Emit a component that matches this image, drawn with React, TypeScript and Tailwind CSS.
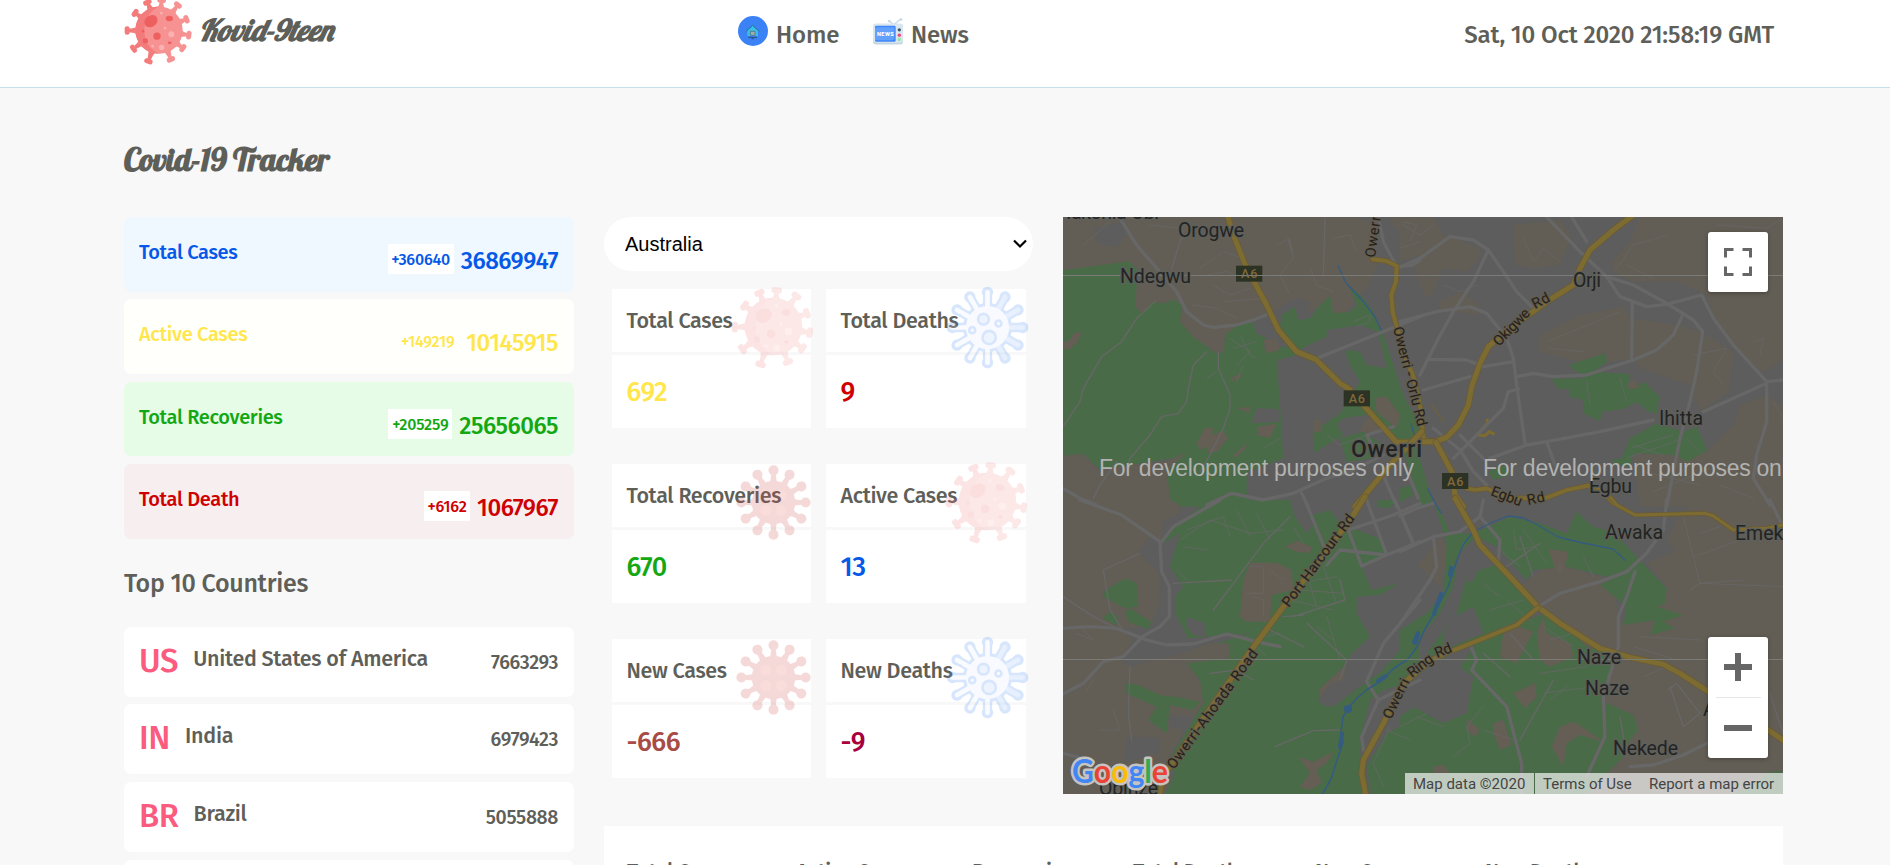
import React from "react";

function CoronaPink({ className }: { className: string }) {
  const knobs: [number, number][] = [
    [183, 3], [232, 17], [258, 60], [265, 108], [247, 147], [211, 181],
  ];
  const darkKnobs: [number, number][] = [
    [140, 9], [143, 187], [98, 149], [79, 94], [103, 41],
  ];
  const spike = ([x, y]: [number, number], color: string) => {
    const a = (Math.atan2(y - 93, x - 175) * 180) / Math.PI;
    const r = Math.hypot(x - 175, y - 93);
    return (
      <g key={`${x}-${y}`} transform={`translate(175 93) rotate(${a})`} fill={color}>
        <path d={`M62 -13 Q74 -6 ${r - 6} -5 V5 Q74 6 62 13 Z`} />
        <rect x={r - 8} y={-13} width={15} height={26} rx={7} />
      </g>
    );
  };
  return (
    <svg viewBox="70 -12 210 212" className={className}>
      {darkKnobs.map((k) => spike(k, "#f37b7b"))}
      {knobs.map((k) => spike(k, "#f79292"))}
      <circle cx="175" cy="93" r="71" fill="#f79292" />
      <path d="M175 22 A71 71 0 0 0 175 164 C145 150 131 122 131 93 C131 62 146 36 175 22Z" fill="#f37b7b" />
      <g fill="#ee5f5f">
        <ellipse cx="151" cy="66" rx="21" ry="17" transform="rotate(-35 151 66)" />
        <ellipse cx="206" cy="58" rx="11" ry="8" />
        <circle cx="169" cy="111" r="11" />
        <circle cx="134" cy="125" r="8" />
        <ellipse cx="207" cy="131" rx="6" ry="4" />
        <circle cx="127" cy="96" r="4" />
      </g>
      <g fill="#fbb1b1">
        <circle cx="212" cy="105" r="9" />
        <circle cx="183" cy="145" r="8" />
        <circle cx="156" cy="141" r="4" />
        <circle cx="182" cy="42" r="4" />
        <circle cx="193" cy="87" r="4" />
      </g>
    </svg>
  );
}

const TWELVE = [0, 30, 60, 90, 120, 150, 180, 210, 240, 270, 300, 330];

function CoronaRed({ className }: { className: string }) {
  return (
    <svg viewBox="-112 -112 224 224" className={className}>
      {TWELVE.map((a) => (
        <g key={a} transform={`rotate(${a})`} fill="#cf4844">
          <path d="M54 -14 Q66 -7 88 -7 V7 Q66 7 54 14Z" />
          <circle cx="96" cy="0" r="15" />
        </g>
      ))}
      <circle r="65" fill="#cf4844" />
      {[[-23, -22], [23, -22], [-23, 24], [23, 24]].map(([x, y]) => (
        <circle key={`${x}${y}`} cx={x} cy={y} r="16" fill="#ea564c" />
      ))}
    </svg>
  );
}

function CoronaBlue({ className }: { className: string }) {
  return (
    <svg viewBox="-125 -125 250 250" className={className} fill="none" strokeLinecap="round">
      {TWELVE.map((a) => (
        <g key={a} transform={`rotate(${a})`}>
          <path d="M70 0H107" stroke="#3c87f5" strokeWidth="28" />
          <circle cx="106" cy="0" r="17" fill="#3c87f5" />
        </g>
      ))}
      <circle r="74" fill="#3c87f5" />
      {TWELVE.map((a) => (
        <path key={a} d="M64 0H106" transform={`rotate(${a})`} stroke={a > 270 || a < 90 ? "#8fb9fb" : "#e6eeff"} strokeWidth="14" />
      ))}
      <circle r="65" fill="#e6ebff" />
      <g stroke="#3c87f5" strokeWidth="8" fill="#a9c9fb">
        <circle cx="-12" cy="-25" r="16" />
        <circle cx="33" cy="-12" r="9" fill="#e6ebff" />
        <circle cx="-46" cy="8" r="9" fill="#e6ebff" />
        <circle cx="5" cy="30" r="20" />
      </g>
      <circle cx="-82" cy="-36" r="4" fill="#3c87f5" />
    </svg>
  );
}

function HomeIcon() {
  return (
    <svg viewBox="0 0 90 90" className="h-[30px] w-[30px]">
      <circle cx="45" cy="45" r="45" fill="#3b82f6" />
      <path d="M28 44V60H60V44L44 29Z" fill="#38c0ea" />
      <path d="M24 46 44 28 64 46" fill="none" stroke="#2a7489" strokeWidth="3" />
      <path d="M37 46h14v12H37z" fill="#9fb0b5" stroke="#4c6470" strokeWidth="2" />
      <path d="M31 64h26M41 68h6" stroke="#2b4f7c" strokeWidth="3" />
    </svg>
  );
}

function NewsIcon() {
  return (
    <svg viewBox="0 0 90 80" className="h-[27px] w-[30px]">
      <path d="M64 18 84 2M60 18 48 8" stroke="#c5d9e8" strokeWidth="4" />
      <circle cx="84" cy="4" r="4" fill="#c5d9e8" />
      <circle cx="49" cy="9" r="4" fill="#c5d9e8" />
      <rect x="0" y="17" width="90" height="62" rx="9" fill="#c3d5e2" />
      <rect x="0" y="17" width="90" height="57" rx="9" fill="#d9e6ee" />
      <rect x="6" y="23" width="62" height="48" rx="4" fill="#3f86fb" />
      <path d="M12 27H64V58Q64 66 56 66H6V30Z" fill="#62a0fb" />
      <text x="12" y="53" fontSize="17" fontWeight="800" fill="#fff" textLength="50" fontFamily="Roboto, sans-serif">NEWS</text>
      <circle cx="79" cy="35" r="5" fill="#34546f" />
      <circle cx="79" cy="51" r="5" fill="#f0427a" />
      <circle cx="79" cy="64" r="5" fill="#8fe8a0" />
    </svg>
  );
}

const stats = [
  { label: "Total Cases", delta: "+360640", value: "36869947", card: "bg-[#eff7ff]", text: "text-[#0558e8]", badge: "w-[66px] bg-white" },
  { label: "Active Cases", delta: "+149219", value: "10145915", card: "bg-[#fffffb]", text: "text-[#ffe64d]", badge: "w-[61px] mr-px" },
  { label: "Total Recoveries", delta: "+205259", value: "25656065", card: "bg-[#e6fce7]", text: "text-[#13a813]", badge: "w-[64px] bg-white" },
  { label: "Total Death", delta: "+6162", value: "1067967", card: "bg-[#f6eeef]", text: "text-[#cf0000]", badge: "w-[46px] bg-white" },
];

const countries = [
  { code: "US", name: "United States of America", count: "7663293" },
  { code: "IN", name: "India", count: "6979423" },
  { code: "BR", name: "Brazil", count: "5055888" },
  { code: "RU", name: "Russian Federation", count: "1285084" },
];

const tiles = [
  { label: "Total Cases", value: "692", color: "text-[#ffe64d]", icon: "pink" },
  { label: "Total Deaths", value: "9", color: "text-[#cf0000]", icon: "blue" },
  { label: "Total Recoveries", value: "670", color: "text-[#13a813]", icon: "red" },
  { label: "Active Cases", value: "13", color: "text-[#0558e8]", icon: "pink" },
  { label: "New Cases", value: "-666", color: "text-[#a94b45]", icon: "red" },
  { label: "New Deaths", value: "-9", color: "text-[#a8003c]", icon: "blue" },
];

const HW = { fill: "none", strokeLinejoin: "round" as const, strokeLinecap: "round" as const };

function Highway({ d, w = 15 }: { d: string; w?: number }) {
  return (
    <g {...HW}>
      <path d={d} stroke="#6b5b36" strokeWidth={w + 5} />
      <path d={d} stroke="#7d6c31" strokeWidth={w} />
    </g>
  );
}

function Shield({ x, y }: { x: number; y: number }) {
  return (
    <g>
      <rect x={x} y={y} width="79" height="48" fill="#2c3325" />
      <text x={x + 15} y={y + 38} fontSize="38" fill="#80693a" textLength="49" fontWeight="500">A6</text>
    </g>
  );
}

function OwerriMap() {
  return (
    <svg viewBox="0 0 720 577" className="block h-[577px] w-[720px] font-normal" fontFamily="Roboto, sans-serif">
      <rect width="720" height="577" fill="#5d5d5d" />
      {/* land cover, north-west */}
      <g transform="translate(-13 -12) scale(.33333)">
        <path fill="#625e55" d="M39 36H925L970 60 960 150 985 180 950 250 890 320 850 330 800 310 770 320 780 290 740 280 700 300 660 330 600 345 560 380 520 445 470 440 420 390 380 330 39 330Z" />
        <path fill="#5d5d5d" d="M130 70 215 50 232 85 200 125 145 120Z" />
        <path fill="#625e55" d="M1020 36H1110V130L1085 110 1030 60Z" />
        <path fill="#625e55" d="M39 750 100 745 150 800 240 780 350 770 400 738 440 745 350 800 365 900H39Z" />
        <path fill="#496b48" d="M39 196 237 169 265 195 260 240 256 305 275 325 305 292 345 295 370 283 397 300 390 350 430 395 500 446 522 440 525 390 570 355 605 345 620 385 650 400 640 430 720 425 745 450 680 465 690 600 700 760 590 800 590 905H365L350 800 410 742 370 760 240 780 150 795 100 746 39 752Z" />
        <path fill="#496b48" d="M695 330 735 305 745 345 780 340 810 300 840 272 850 325 900 320 920 300 895 240 940 280 970 320 1000 390 1030 480 1060 570 1110 660V735L1045 715 1000 660 950 630 880 640 860 660 880 690 790 745 790 680 870 625 930 530 900 480 885 435 930 440 950 480 1010 490 985 380 930 360 830 375 830 395 745 435 700 400 690 370Z" />
        <path fill="#496b48" d="M870 700 940 680 1000 720 970 760 890 770Z" />
        <g fill="#655e54">
          <path d="M39 410 60 405 70 385 97 380 80 415 60 433 39 432ZM440 715 465 670 490 668 480 720 450 735ZM480 690 520 678 535 700 500 740 470 745ZM540 520 575 505 570 518 545 528ZM640 405 680 400 690 435 650 445ZM560 610 600 605 600 625ZM550 750 590 715 588 728 555 760ZM625 665 680 655 660 700 620 690ZM790 645 815 645 815 680 790 680ZM975 580 1010 575 1050 630 1040 670 980 620ZM940 650 970 635 990 680 930 680Z" />
        </g>
        <path fill="#5d5d5d" d="M620 610 685 612 690 650 605 655Z" />
      </g>
      {/* land cover, north-east */}
      <g transform="translate(337 -12) scale(.33333)">
        <g fill="#625e55">
          <path d="M720 36H1149V460L1100 500 1060 490 990 420 940 330 920 270 900 260 830 230 700 230 640 200 635 170 690 110Z" />
          <path d="M0 36H100L130 90 240 130 235 165 200 200 130 190 95 270 75 275 45 200 60 150 0 170Z" />
          <path d="M340 60 480 45 515 100 480 180 400 190 345 180ZM115 290 180 260 240 300 235 330 120 315Z" />
          <path d="M420 390 540 330 670 305 690 340 830 360 900 380 1000 440 985 560 900 620 870 540 720 490 700 460 580 480 420 440Z" />
          <path d="M1020 600 1100 570 1149 600V905H720L700 760 760 710 820 700 920 740 1000 660Z" />
        </g>
        <path fill="#496b48" d="M505 480 615 445 622 470 580 500 690 508 690 545 735 532 778 575 770 625 750 622 710 592 670 612 607 620 600 648 580 640 550 625 550 585 510 575 505 550 475 552 455 522 555 520Z" />
        <path fill="#655e54" d="M680 535 705 525 720 545 690 555Z" />
        <path fill="#496b48" d="M770 655 850 680 890 665 922 735 860 772 830 750 700 745 690 785 640 775 635 765 665 760 690 700Z" />
        <path fill="#496b48" d="M0 590 30 640 60 760 100 900H60L0 700ZM265 800 310 780 330 810 280 825ZM0 850 30 840 40 870 0 890Z" />
        <path fill="none" stroke="#7d6c31" strokeWidth="9" d="M262 642V655L232 690 255 692 268 680 284 688" />
      </g>
      {/* land cover, south-west */}
      <g transform="translate(-13 283) scale(.33333)">
        <path fill="#625e55" d="M39 0H385L390 40 340 60 335 125 300 110 265 155 325 220 330 300 300 380 215 385 250 420 210 480 235 500 400 460 480 430 540 430 540 475 420 490 470 590 430 660 360 650 400 700 350 780 350 882H39Z" />
        <path fill="#5d5d5d" d="M230 710 330 712 330 760 220 790ZM355 645 430 650 430 680 360 685Z" />
        <path fill="#496b48" d="M390 100 340 130 370 80 480 0H720L735 50 770 100 800 60 770 50 840 30 870 70 1000 120 1005 165 935 200 965 270 1050 250 990 285 920 290 920 340 960 410 905 460 880 500 815 560 805 600 850 620 900 570 990 520 1050 450 1110 345V500L1060 540 1000 600 940 680 930 760 960 882H345L375 820 350 790 460 610 450 540 410 490 540 475 540 430 500 430 600 400 415 415 375 340 375 290 400 260 360 200Z" />
        <path fill="#496b48" d="M360 0H440L400 18ZM985 0H1040L1020 25 980 20ZM1010 700 1080 640 1110 640V830L1060 882H965L950 800Z" />
        <path fill="#496b48" d="M160 275 225 235 260 250 265 320 225 325 190 305 158 290ZM158 355 180 335 205 350 200 375ZM225 335 240 325 303 365 295 388 235 365ZM228 550 265 555 330 585 365 590 380 590 450 605 430 630 360 615 350 700 295 660 320 620 228 580Z" />
        <g fill="#655e54">
          <path d="M600 188 680 188 725 210 730 270 665 285 660 365 590 365 570 350 580 240ZM705 140 740 122 785 140 780 160 740 155ZM745 770 790 785 850 755 830 790 800 810 815 850 780 870 750 860 780 820ZM805 570 890 495 880 540 850 610 815 615Z" />
        </g>
        <path fill="#5d5d5d" d="M805 600 840 550 880 540 1000 400 1110 300V345L1040 460 950 545 850 620 815 615ZM410 350 465 370 470 410 430 405 410 380ZM960 600 1000 570 1110 540V650L1010 700 950 790 930 720Z" />
      </g>
      {/* land cover, south-east */}
      <g transform="translate(337 283) scale(.33333)">
        <path fill="#625e55" d="M840 40 900 0H1149V882H560L600 560 560 440 640 380 780 300 800 260 740 190 830 150 880 220 800 120Z" />
        <path fill="#625e55" d="M50 200 120 110 150 150 120 260 70 210ZM150 370 200 300 180 380ZM360 260 450 190 640 240 660 400 640 450 560 440 420 330Z" />
        <path fill="#496b48" d="M100 0 130 50 150 100 220 100 330 50 420 70 500 100 530 35 580 80 640 95 700 160 800 265 795 310 770 320 850 345 790 365 825 385 750 405 765 360 670 375 680 320 600 255 640 235 500 200 400 210 380 240 290 140 230 110 175 160 160 260 120 340 60 410 0 480V390L80 340 130 280 140 130Z" />
        <path fill="#655e54" d="M445 147 505 155 490 220 470 220Z" />
        <path fill="#496b48" d="M200 230 240 210 300 190 410 320 340 370 240 410 120 480 80 460 170 340ZM240 415 350 370 440 340 520 400 560 440 620 460 640 500 600 600 700 645 715 690 690 720 680 760 560 882H0V650L40 620 130 670 200 640 220 530 180 500Z" />
        <g fill="#655e54">
          <path d="M310 400 360 380 400 395 350 490 300 470ZM410 400 430 350 440 400 510 430 520 470 450 500 420 480ZM340 580 405 550 410 590 375 625ZM455 740 480 680 520 665 560 690 610 725 540 705 500 730 490 800ZM280 670 310 660 335 735 300 750 280 700ZM200 655 240 690 225 710 200 690ZM100 800 130 795 150 819 100 819Z" />
        </g>
        <path fill="#5d5d5d" d="M200 180 235 190 220 245 200 245ZM160 350 220 320 250 400 130 450 130 400ZM0 580 150 470 200 520 200 620 120 665 50 620 0 640Z" />
        <path fill="#496b48" d="M1100 819 1140 810 1149 830 1149 882H1000L1080 840Z" />
      </g>
      {/* minor roads */}
      <g {...HW} stroke="#676767">
        <g transform="translate(-13 -12) scale(.33333)">
          <path strokeWidth="10" d="M210 40 260 120 320 190 380 260 410 320 460 360 490 367 560 360 610 345 660 325M800 460 900 420 1000 380 1110 335M985 36 1000 110 1040 185 1090 180 1110 165M39 850 90 880 140 900M470 900 545 865 640 885 730 865 830 820 900 800 1000 750M950 690 1030 665M950 690 970 730M755 865 775 905M1000 810 1040 905M1080 820 1105 880" />
          <path strokeWidth="4" d="M39 665 90 590 100 550 155 455 215 410 260 340 315 290M240 760 300 690 335 635 385 625 410 590 415 550 430 480 470 440M505 440 505 490 540 570 540 610 520 670 480 750 450 800M365 190 400 80M825 40 820 210M715 105 725 140M200 770 150 840 130 880M240 760 235 780" />
          <path strokeWidth="3" opacity=".75" d="M450 190 520 140 580 160M470 210 530 200 600 230M490 240 540 270 600 250M520 290 640 280M430 300 500 310 560 340M680 120 720 100 730 160 690 210 720 270M780 190 800 240 850 260M850 100 900 90 920 140M540 400 600 440 560 480M550 430 620 410M570 390 600 450 620 460M580 480 560 530M470 520 500 500M100 120 180 50M300 60 390 70M640 730 690 700M830 690 870 720 950 690M1060 50 1100 60 1080 110M910 350 960 330 960 350 920 365" />
        </g>
        <g transform="translate(337 -12) scale(.33333)">
          <path strokeWidth="10" d="M0 187 60 160 150 95 220 105 265 135 220 230 160 320 110 410 60 510M265 135 310 200 350 260 400 310M0 350 110 320 210 305 260 325 320 400 340 460 350 540 375 715M90 463 200 465 250 485 340 470M70 555 210 515M350 515 400 505 460 515 560 510 620 490 700 465 770 435 820 390 850 325M440 36 540 140 620 215 700 240 800 295 880 345 908 380 890 500 870 590 840 700 800 905M515 36 560 110M620 215 660 275 740 305 800 298 905 270 940 340 1000 420 1100 530 1149 525M697 290 695 465M910 620 1100 535M1100 535 1100 650 1070 750 1060 820 1110 900M760 645 600 680 440 710 380 720 270 760M440 710 465 780M355 552 325 560 310 610 240 680 160 760M100 670 180 735 220 800 260 840M180 690 250 760" />
          <path strokeWidth="3" opacity=".7" d="M10 60 60 90 100 60M0 130 60 110M130 240 180 260 230 240M370 100 400 170 430 130 480 170M650 190 700 120 800 90M680 180 760 220M440 410 540 370 660 320M450 430 550 440M880 450 980 430 940 500 970 540M690 730 820 690M700 720 790 750M680 760 850 700M860 700 900 740M730 800 900 840M760 860 930 790M960 840 1060 880M1060 410 1090 400 1080 450M1120 590 1149 640M950 60 1100 70 1149 40M560 530 570 600M660 520 680 590" />
        </g>
        <g transform="translate(-13 283) scale(.33333)">
          <path strokeWidth="10" d="M90 0 215 45 330 125 335 215 358 260 358 350 330 380 280 408 220 470 160 485 100 550 39 582M39 385 120 380 200 385 290 420 350 435 430 432 530 402 620 425 690 440M335 125 370 80 510 0M765 0 830 160M950 0 1010 165 935 198 895 90 1030 45 1110 10M1035 0 1090 130M830 195 870 150 1010 165 1110 125M1110 300 1000 430 950 545 985 600 935 710 940 750M985 600 1110 540M39 760 100 775" />
          <path strokeWidth="4" d="M39 290 130 350 230 400M720 50 640 130 490 330M370 250 545 240M675 740 790 692 870 690M240 500 235 640 245 720M215 385 180 330 160 210 270 160M480 520 560 510 610 540M700 350 760 345M660 390 760 440M870 240 885 300 730 350M770 370 890 480 870 540" />
          <path strokeWidth="3" opacity=".75" d="M390 120 480 60 600 100 700 90M400 140 470 150M410 90 520 50 540 110M560 30 600 110M620 40 660 120M380 210 420 250M600 200 640 200 640 280 590 280M610 290 640 300 640 350M660 210 700 240M740 250 860 230M750 270 880 280M770 220 800 320M820 200 860 310M720 300 850 330M800 380 850 420M830 350 870 480M640 410 690 400M590 410 650 470M100 390 130 420 80 400M130 540 110 570M190 630 210 690 150 690M730 80 760 130M1020 680 970 790 1000 860M1080 720 1010 690" />
        </g>
        <g transform="translate(337 283) scale(.33333)">
          <path strokeWidth="10" d="M0 48 50 25 100 10M10 60 40 130M0 155 100 110 180 95 240 50 250 0M240 50 300 120 295 180M100 110 110 200 90 240 0 370M415 320 480 280 600 245 680 215 740 160 790 90 800 0M705 215 680 290 655 350 655 440 610 590 615 710 560 830M1110 0 1149 80M215 445 230 480 215 510 320 620 365 790M365 790 365 882M690 800 760 795 850 765 930 725" />
          <path strokeWidth="4" d="M660 650 680 770M330 400 400 480M250 460 330 530M460 540 360 720M360 110 400 230M320 200 420 130M1110 580 1149 700M810 560 850 680 900 640 830 550 805 570" />
          <path strokeWidth="3" opacity=".75" d="M340 90 350 150 400 140M300 150 360 200M370 90 440 190M480 190 480 220M550 170 580 230M250 250 300 290M270 330 370 300M320 300 400 370M430 380 520 440M450 420 520 400M420 520 560 500M430 580 580 560M450 600 500 560M250 620 200 680 210 730 160 770M50 650 130 680M0 680 80 640M250 690 340 720M850 50 900 250 1030 240M900 100 960 80M880 170 1050 110M870 270 900 250 1149 260M720 410 900 420M700 440 830 480M730 530 800 500" />
        </g>
      </g>
      {/* water */}
      <g {...HW} stroke="#335c80">
        <path strokeWidth="1.3" d="M275 49 283 66 300 84 312 100 318 113M348 207 352 220M365 272 372 286 378 296M394 343 400 328 410 315 430 305 445 299 460 301 475 308 495 320 520 326 550 332 562 343" />
        <path strokeWidth="1.6" d="M394 343 390 355 385 370 372 395 362 412 354 430 345 442 330 452 318 464 305 472 295 480 286 490 280 500 278 515 280 525 275 540 268 562 259 578" />
        <path strokeWidth="4" d="M388 351 387 358M378 377 371 397M355 416 351 425M355 418 352 426M323 459 315 464M279 517 277 530M283 491 287 491" />
        <circle cx="285" cy="492" r="4" fill="#335c80" stroke="none" />
      </g>
      {/* highways */}
      <g transform="translate(-13 -12) scale(.33333)">
        <Highway d="M532 30 550 90 590 190 650 300 685 375 740 440 798 464 870 535 895 550 1040 712 1120 712" />
        <Highway d="M968 163 1010 168 1040 183 1038 230 1024 270 1028 320 1060 440 1092 520 1112 610 1120 700 1130 705" w={12} />
        <Highway d="M1115 680 1020 780 915 905" />
        <Shield x={558} y={182} />
        <Shield x={881} y={556} />
      </g>
      <g transform="translate(337 -12) scale(.33333)">
        <Highway d="M700 30 640 75 570 135 540 190 520 240 440 290 330 370 265 425 240 475 215 545 205 600 175 660 140 697 105 710 60 710" />
        <Highway d="M108 712 155 800 165 870 190 905" />
        <Highway d="M200 850 225 855 260 850 330 880 440 878 500 855 565 842 600 850 640 895" w={11} />
        <path d="M95 600 130 650" stroke="#6e6239" strokeWidth="4" />
        <Shield x={126} y={804} />
      </g>
      <g transform="translate(-13 283) scale(.33333)">
        <Highway d="M945 -10 900 60 700 320 600 455 345 820 325 890" />
        <Highway d="M1120 500 1060 550 1000 670 940 780 935 820 948 890" />
      </g>
      <g transform="translate(337 283) scale(.33333)">
        <Highway d="M165 -5 220 90 240 135 330 230 415 322 480 370 600 445 690 472 790 493 840 520 930 578 1060 660 1149 720" />
        <Highway d="M415 322 350 375 250 415 150 455 70 490" w={12} />
        <Highway d="M630 -10 650 15 705 45 800 43 915 40 940 48 1000 90 1100 85 1149 75" w={9} />
      </g>
      <path d="M0 58.5H720M0 442.5H720" stroke="#7b7c78" strokeWidth="1" />
      {/* place names */}
      <g fill="#222423" stroke="#5f5f5b" strokeWidth="2.5" paintOrder="stroke" strokeLinejoin="round" fontSize="19.5">
        <text x="3" y="2" textLength="93">Iakohia Obi</text>
        <text x="115" y="20" textLength="66">Orogwe</text>
        <text x="57" y="66" textLength="71">Ndegwu</text>
        <text x="510" y="70" textLength="28">Orji</text>
        <text x="596" y="208" textLength="44">Ihitta</text>
        <text x="526" y="276" textLength="43">Egbu</text>
        <text x="542" y="322" textLength="58">Awaka</text>
        <text x="672" y="323">Emekuku</text>
        <text x="514" y="447" textLength="44">Naze</text>
        <text x="522" y="478" textLength="44">Naze</text>
        <text x="550" y="538" textLength="65">Nekede</text>
        <text x="640" y="499">A</text>
        <text x="36" y="578" textLength="59">Obinze</text>
        <text x="288" y="240" fontSize="23" fontWeight="500" textLength="71">Owerri</text>
      </g>
      {/* street names */}
      <g fill="#262018" stroke="#615c4f" strokeWidth="2" paintOrder="stroke" strokeLinejoin="round" fontSize="14.5">
        <text transform="translate(312 41) rotate(-82)" textLength="46">Owerri</text>
        <text transform="translate(330 111) rotate(76)" textLength="102">Owerri - Orlu Rd</text>
        <text transform="translate(436 130) rotate(-46)" textLength="46">Okigwe</text>
        <text transform="translate(472 92) rotate(-28)" textLength="18">Rd</text>
        <text transform="translate(427 278) rotate(21)" textLength="32">Egbu</text>
        <text transform="translate(465 288) rotate(-12)" textLength="18">Rd</text>
        <text transform="translate(226 391) rotate(-53.5)" textLength="111">Port Harcourt Rd</text>
        <text transform="translate(111 553) rotate(-54)" textLength="144">Owerri-Ahoada Road</text>
        <text transform="translate(328 503) rotate(-64)" textLength="43">Owerri</text>
        <text transform="translate(349 461) rotate(-38)" textLength="28">Ring</text>
        <text transform="translate(374 441) rotate(-22)" textLength="17">Rd</text>
      </g>
      <g fill="#b2b2b1" fontFamily="Liberation Sans, Arial, sans-serif" fontSize="23">
        <text x="36" y="259" textLength="315">For development purposes only</text>
        <text x="420" y="259" textLength="315">For development purposes only</text>
      </g>
      <g fontFamily="Lato, sans-serif" fontWeight="700" fontSize="33" stroke="#c6c4c1" strokeWidth="5" paintOrder="stroke" strokeLinejoin="round">
        <text x="9" y="566" textLength="96" lengthAdjust="spacingAndGlyphs">
          <tspan fill="#4285f4">G</tspan>
          <tspan fill="#ea4335">o</tspan>
          <tspan fill="#fbbc05">o</tspan>
          <tspan fill="#4285f4">g</tspan>
          <tspan fill="#34a853">l</tspan>
          <tspan fill="#ea4335">e</tspan>
        </text>
      </g>
    </svg>
  );
}

function MapPanel() {
  return (
    <section className="relative h-[577px] w-[720px] overflow-hidden">
      <OwerriMap />
      <button className="absolute top-[15px] right-[15px] flex h-[60px] w-[60px] items-center justify-center rounded-[3px] bg-white shadow-[0_1px_4px_rgba(0,0,0,0.3)]">
        <svg viewBox="0 0 28 28" className="h-7 w-7" fill="none" stroke="#666" strokeWidth="3">
          <path d="M1.500 9.500V1.500H9.500M18.500 1.500H26.500V9.500M26.500 18.500V26.500H18.500M9.500 26.500H1.500V18.500" />
        </svg>
      </button>
      <div className="absolute right-[15px] bottom-[36px] flex h-[121px] w-[60px] flex-col items-center rounded-[3px] bg-white shadow-[0_1px_4px_rgba(0,0,0,0.3)]">
        <button className="flex h-[60px] w-[60px] items-center justify-center">
          <svg viewBox="0 0 28 28" className="h-7 w-7" stroke="#666" strokeWidth="6">
            <path d="M0 14H28M14 0V28" />
          </svg>
        </button>
        <div className="h-px w-[45px] bg-[#e6e6e6]" />
        <button className="flex h-[60px] w-[60px] items-center justify-center">
          <svg viewBox="0 0 28 28" className="h-7 w-7" stroke="#666" strokeWidth="6">
            <path d="M0 14H28" />
          </svg>
        </button>
      </div>
      <div className="absolute right-0 bottom-0 flex h-[21px] gap-px font-[Roboto,sans-serif] text-[15px] leading-[22px] font-normal whitespace-nowrap text-[#444]">
        <span className="w-[129px] bg-[#f5f5f5]/70 pl-2">Map data ©2020</span>
        <span className="flex w-[248px] bg-[#f5f5f5]/70 pl-2">
          <span className="w-[106px]">Terms of Use</span>
          <span>Report a map error</span>
        </span>
      </div>
    </section>
  );
}

function TileIcon({ kind }: { kind: string }) {
  if (kind === "pink")
    return <CoronaPink className="absolute -top-[5px] left-[119px] h-[86px] w-[85px] opacity-20" />;
  if (kind === "blue")
    return <CoronaBlue className="absolute -top-[3px] left-[120px] h-[83px] w-[83px] opacity-20" />;
  return <CoronaRed className="absolute top-[1px] left-[124px] h-[75px] w-[75px] opacity-20" />;
}

export default function App() {
  return (
    <div className="h-[865px] w-[1890px] overflow-hidden bg-[#f8f8f8] font-['Fira_Sans','Noto_Sans',sans-serif] font-medium whitespace-nowrap text-[#5f5f5a]">
      <header className="flex h-[88px] items-start border-b border-[#c5dfec] bg-white pr-[116px] pl-[124px]">
        <div className="flex w-[614px] items-start">
          <CoronaPink className="-mt-[5px] h-[71px] w-[70px] shrink-0" />
          <span className="mt-[6px] ml-[5px] font-[Lobster,'Liberation_Serif',serif] text-[30px] leading-[48px] font-bold italic">Kovid-9teen</span>
        </div>
        <nav className="flex flex-1 items-start text-[24px] leading-9 tracking-[-0.1px]">
          <a className="flex w-[135px] items-start">
            <span className="mt-4"><HomeIcon /></span>
            <span className="mt-[17px] ml-2">Home</span>
          </a>
          <a className="flex items-start">
            <span className="mt-[18px]"><NewsIcon /></span>
            <span className="mt-[17px] ml-2">News</span>
          </a>
        </nav>
        <time className="mt-[17px] text-[24px] leading-9 tracking-[-0.15px]">Sat, 10 Oct 2020 21:58:19 GMT</time>
      </header>

      <main className="pl-[124px]">
        <h1 className="h-[129px] pt-[47px] font-[Lobster,'Liberation_Serif',serif] text-[32px] leading-[48px] font-bold tracking-[-0.2px]">Covid-19 Tracker</h1>
        <div className="flex gap-[30px]">
          <aside className="w-[450px]">
            {stats.map((s) => (
              <div key={s.label} className={`mb-[7.8px] flex h-[74.6px] items-start rounded-[7px] pr-4 pl-[15px] ${s.card} ${s.text}`}>
                <span className="mt-[20px] flex-1 text-[20px] leading-[30px] tracking-[-0.32px]">{s.label}</span>
                <span className={`mt-[27px] h-[30px] text-center text-[16px] leading-[31px] tracking-[-0.2px] ${s.badge}`}>{s.delta}</span>
                <span className="mt-[26px] ml-[7px] text-[24px] leading-9 tracking-[-0.5px]">{s.value}</span>
              </div>
            ))}
            <h2 className="h-[80px] pt-[19px] text-[25px] leading-9 tracking-[-0.28px]">Top 10 Countries</h2>
            {countries.map((c) => (
              <div key={c.code} className="mb-[7.7px] flex h-[70px] items-start rounded-[7px] bg-white pr-4 pl-[15px]">
                <span className="mt-[10px] text-[33px] leading-[48px] tracking-[-0.4px] text-[#fb5b7f]">{c.code}</span>
                <span className="mt-[16px] ml-[15px] flex-1 text-[21.5px] leading-[32px] tracking-[-0.28px]">{c.name}</span>
                <span className="mt-[21px] text-[19.5px] leading-[30px] tracking-[-0.35px]">{c.count}</span>
              </div>
            ))}
          </aside>

          <div className="w-[1179px]">
            <div className="flex h-[609px] justify-between">
              <section className="w-[429px]">
                <div className="flex h-[54px] items-center justify-between rounded-[27px] bg-white pr-[6px] pl-[21px] font-['Liberation_Sans',Arial,sans-serif] text-[20px] font-normal text-black">
                  <span>Australia</span>
                  <svg viewBox="0 0 14 10" className="h-[10px] w-[14px]" fill="none" stroke="#000" strokeWidth="2.200">
                    <path d="M1 1.500 7 7.500 13 1.500" />
                  </svg>
                </div>
                <div className="mt-[18px] ml-2 grid grid-cols-[199px_200px] gap-x-[15px] gap-y-9">
                  {tiles.map((t) => (
                    <div key={t.label} className="relative h-[139px]">
                      <div className="h-[63px] bg-white pt-[16px] pl-[14.5px] text-[21.5px] leading-[32px] tracking-[-0.33px]">{t.label}</div>
                      <div className={`mt-[3px] h-[73px] bg-white pt-[18px] pl-[14.5px] text-[27px] leading-[38px] tracking-[-0.5px] ${t.color}`}>{t.value}</div>
                      <TileIcon kind={t.icon} />
                    </div>
                  ))}
                </div>
              </section>
              <MapPanel />
            </div>
            <div className="grid h-[200px] grid-cols-[169px_176px_161px_182px_170px_1fr] bg-white pt-[30px] pl-[23px] text-[21px] leading-[32px] tracking-[-0.3px]">
              <span>Total Cases</span>
              <span>Active Cases</span>
              <span>Recoveries</span>
              <span>Total Deaths</span>
              <span>New Cases</span>
              <span>New Deaths</span>
            </div>
          </div>
        </div>
      </main>
    </div>
  );
}
